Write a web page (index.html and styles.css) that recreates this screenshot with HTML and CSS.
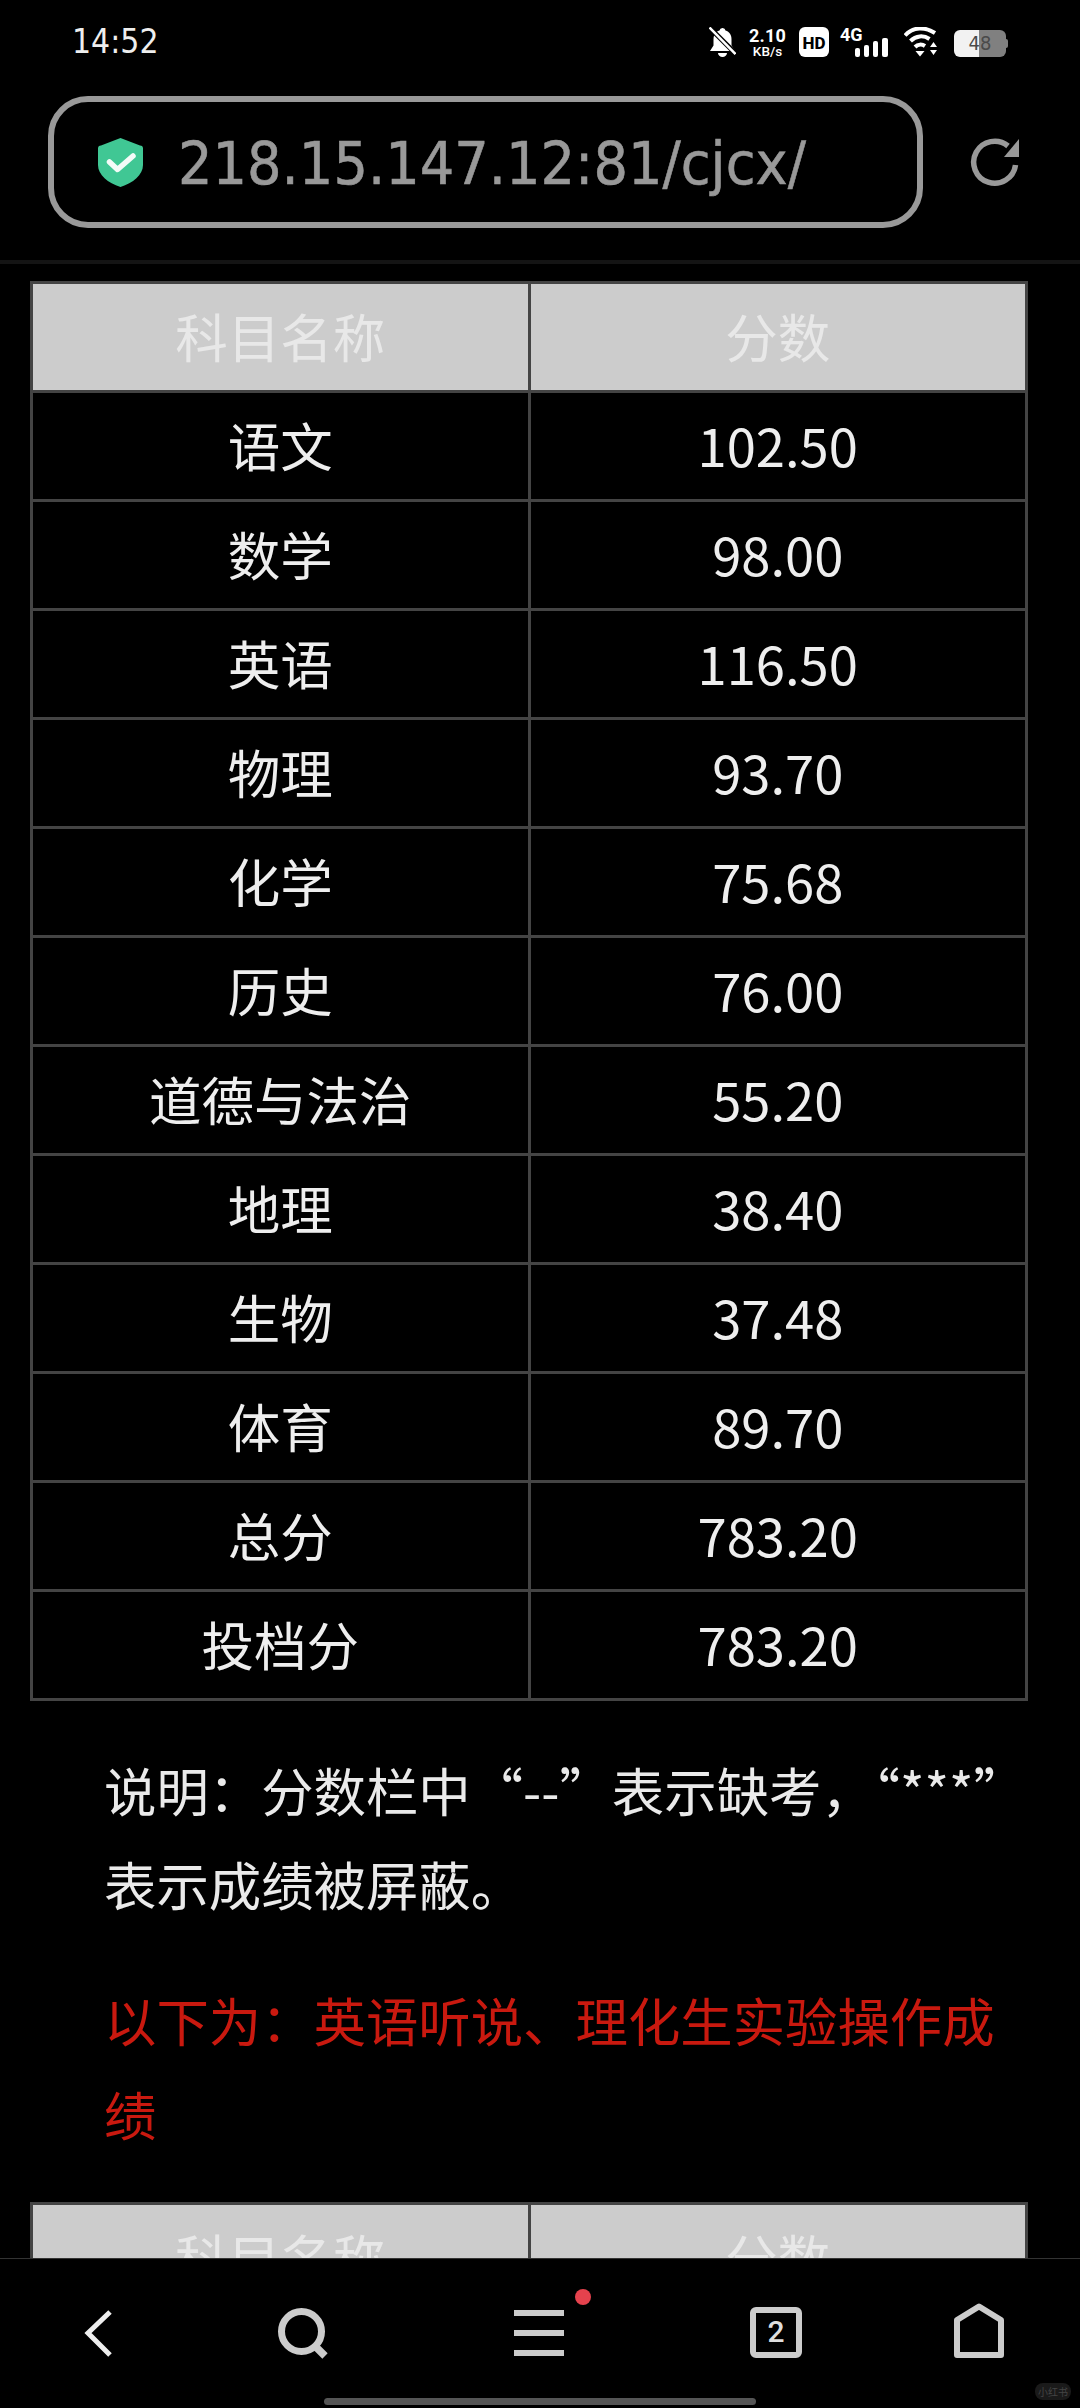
FILE: index.html
```html
<!DOCTYPE html>
<html lang="zh-CN">
<head>
<meta charset="utf-8">
<title>成绩查询</title>
<link rel="stylesheet" href="styles.css">
</head>
<body>
<div class="page">
  <header class="status">
    <span class="time">14:52</span>
    <div class="status-icons">
      <svg class="i-bell" viewBox="0 0 27 30"><path d="M13.5 1a3 3 0 0 1 3 2.5c4 1.200 6 4.500 6 9v6l3.500 5.500h-25l3.500-5.500v-6c0-4.500 2-7.800 6-9a3 3 0 0 1 3-2.500zM9 26h9a4.500 4 0 0 1-9 0z" fill="#fff"/><path d="M0 0 27 27" stroke="#000" stroke-width="5"/><path d="M0.500 0.500 26.500 27" stroke="#fff" stroke-width="2.500"/></svg>
      <div class="speed"><span class="speed-v">2.10</span><span class="speed-u">KB/s</span></div>
      <svg class="i-hd" viewBox="0 0 30 30"><rect width="30" height="30" rx="6" fill="#fff"/><text x="15" y="21.500" text-anchor="middle" class="hd-t">HD</text></svg>
      <svg class="i-net" viewBox="0 0 47 30"><text x="-3" y="14" class="net-t">4G</text><g fill="#fff"><rect x="12" y="21" width="5" height="9" rx="2"/><rect x="21" y="18" width="5" height="12" rx="2"/><rect x="30" y="14" width="5" height="16" rx="2"/><rect x="39" y="11" width="6" height="19" rx="2"/></g></svg>
      <svg class="i-wifi" viewBox="0 0 36 30"><g fill="none" stroke="#fff" stroke-width="4"><path d="M1 8.500C9-.5 21-.5 31 6"/><path d="M6.500 14C12 8.500 19.500 8 25.500 12"/><path d="M11 20c3-3 7-3 10-1"/></g><path d="M11.500 24h9l-4.500 5.500z" fill="#fff"/><path d="M29.500 15l-3.500 5h7zM26 23h7l-3.500 5z" fill="#fff"/></svg>
      <div class="battery"><div class="batt-body"><span class="batt-fill"></span><span class="batt-rest"></span><span class="batt-num">48</span></div><span class="batt-cap"></span></div>
    </div>
  </header>

  <div class="urlrow">
    <div class="urlbar">
      <svg class="i-shield" viewBox="0 0 45 49"><path d="M22.500 0 42 7.500a3 3 0 0 1 3 3V27c0 10-10 18-22.500 22C10 45 0 37 0 27V10.500a3 3 0 0 1 3-3z" fill="#40c794"/><path d="M11.500 24l8 7.500L35 18" fill="none" stroke="#f4fbf8" stroke-width="5.500" stroke-linecap="round" stroke-linejoin="round"/></svg>
      <span class="url-text">218.15.147.12:81/cjcx/</span>
    </div>
    <svg class="i-reload" viewBox="0 0 50 50"><path d="M45.500 28A21 21 0 1 1 38 9" fill="none" stroke="#999" stroke-width="5.500"/><path d="M49 2v18H34z" fill="#999"/></svg>
  </div>

  <main class="content">
    <table class="score">
      <thead><tr><th>科目名称</th><th>分数</th></tr></thead>
      <tbody>
        <tr><td>语文</td><td>102.50</td></tr>
        <tr><td>数学</td><td>98.00</td></tr>
        <tr><td>英语</td><td>116.50</td></tr>
        <tr><td>物理</td><td>93.70</td></tr>
        <tr><td>化学</td><td>75.68</td></tr>
        <tr><td>历史</td><td>76.00</td></tr>
        <tr><td>道德与法治</td><td>55.20</td></tr>
        <tr><td>地理</td><td>38.40</td></tr>
        <tr><td>生物</td><td>37.48</td></tr>
        <tr><td>体育</td><td>89.70</td></tr>
        <tr><td>总分</td><td>783.20</td></tr>
        <tr><td>投档分</td><td>783.20</td></tr>
      </tbody>
    </table>
    <p class="note">说明&#xFF1A;分数栏中“--”表示缺考&#xFF0C;“***”表示成绩被屏蔽。</p>
    <p class="note note-red">以下为&#xFF1A;英语听说、理化生实验操作成绩</p>
    <table class="score score-next">
      <thead><tr><th>科目名称</th><th>分数</th></tr></thead>
    </table>
  </main>

  <footer class="nav">
    <div class="nav-row">
      <span class="slot"><svg class="i-nav i-back" viewBox="0 0 30 60"><path d="M26 9 4 30l22 22" fill="none" stroke="#eee" stroke-width="5" stroke-linejoin="miter"/></svg></span>
      <span class="slot"><svg class="i-nav" viewBox="0 0 60 60"><circle cx="29.500" cy="28.500" r="20" fill="none" stroke="#ccc" stroke-width="7"/><path d="M44 44l9 9" stroke="#ccc" stroke-width="7.500"/></svg></span>
      <span class="slot slot-menu"><svg class="i-nav" viewBox="0 0 60 60"><g fill="#ccc"><rect x="5" y="7" width="50" height="6"/><rect x="5" y="27" width="50" height="6"/><rect x="5" y="47" width="50" height="6"/></g></svg><span class="dot"></span></span>
      <span class="slot"><svg class="i-nav" viewBox="0 0 60 60"><rect x="7" y="7" width="46" height="45" rx="3" fill="none" stroke="#ccc" stroke-width="6"/><text x="30" y="39" text-anchor="middle" class="tab-n">2</text></svg></span>
      <span class="slot"><svg class="i-nav" viewBox="0 0 60 60"><path d="M30 3.500 52 17v35H8V17z" fill="none" stroke="#ccc" stroke-width="6" stroke-linejoin="round"/></svg></span>
    </div>
    <div class="home-bar"></div>
    <span class="mark">小红书</span>
  </footer>
</div>
</body>
</html>
```
FILE: styles.css
```css
* { box-sizing: border-box; }
html, body { margin: 0; padding: 0; background: #000; }
body { font-family: "Noto Sans CJK SC", "Noto Sans", sans-serif; color: #eee; }
.page { width: 1080px; height: 2408px; display: flex; flex-direction: column; overflow: hidden; background: #000; }

.status { height: 96px; padding: 27px 72px 0 72px; display: flex; justify-content: space-between; align-items: flex-start; flex: none; }
.time { font-family: "DejaVu Sans", sans-serif; font-size: 33px; line-height: 30px; color: #eee; transform: scaleX(.91); transform-origin: left center; }
.status-icons { display: flex; align-items: center; gap: 14px; height: 30px; }
.i-bell { width: 27px; height: 30px; }
.speed { width: 35px; display: flex; flex-direction: column; align-items: center; font-family: "Roboto", sans-serif; color: #fff; font-weight: 700; }
.speed-v { font-size: 18px; line-height: 17px; letter-spacing: .2px; }
.speed-u { font-size: 13.500px; line-height: 14px; font-weight: 500; }
.i-hd { width: 30px; height: 30px; }
.hd-t { font: 800 17px "Roboto", sans-serif; fill: #000; }
.i-net { width: 47px; height: 30px; overflow: visible; }
.net-t { font: 700 18px "Roboto", sans-serif; fill: #fff; }
.tab-n { font: 500 30px "Roboto", sans-serif; fill: #ddd; }
.i-wifi { width: 36px; height: 30px; }
.battery { display: flex; align-items: center; width: 54px; height: 27px; margin-top: 3px; }
.batt-body { position: relative; width: 52px; height: 27px; display: flex; border-radius: 6px; overflow: hidden; }
.batt-fill { width: 25px; background: #f2f2f2; }
.batt-rest { flex: 1; background: #808080; }
.batt-num { position: absolute; inset: 0; text-align: center; font: 400 20px/27px "DejaVu Sans", sans-serif; color: #4a4a4a; transform: scaleX(.9); }
.batt-cap { width: 2px; height: 9px; background: #808080; border-radius: 0 2px 2px 0; }

.urlrow { flex: none; display: flex; align-items: flex-start; gap: 47px; padding: 0 0 32px 48px; border-bottom: 4px solid #141414; }
.urlbar { width: 875px; height: 132px; border: 6px solid #999; border-radius: 40px; display: flex; align-items: center; gap: 35px; padding-left: 44px; }
.i-shield { width: 45px; height: 49px; flex: none; }
.url-text { font-family: "DejaVu Sans", sans-serif; font-size: 59px; line-height: 70px; color: #999; white-space: nowrap; transform: scaleX(.92); transform-origin: left center; margin-top: 4px; -webkit-text-stroke: .6px #999; }
.i-reload { width: 50px; height: 50px; margin-top: 41px; flex: none; }

.content { flex: 1; min-height: 0; overflow: hidden; padding: 17px 52px 0 30px; }
.score { width: 998px; table-layout: fixed; border-collapse: collapse; border: 3px solid #444; }
.score th, .score td { width: 50%; height: 109px; padding: 0 0 5px; border: 3px solid #444; text-align: center; vertical-align: middle; font-size: 52.500px; font-weight: 400; line-height: 60px; }
.score th { background: #ccc; color: #e8e8e8; }
.score td { color: #eee; }
.note { margin: 42px 0 0; padding-left: 74px; width: 970px; font-size: 52.400px; line-height: 94px; color: #eaeaea; }
.score + .note { margin-top: 41px; }
.note-red { color: #c9190f; }
.score-next { margin-top: 42px; }

.nav { flex: none; height: 150px; border-top: 1px solid #333; position: relative; padding-top: 44px; background: #000; }
.nav-row { display: grid; grid-template-columns: 198px 208px 266px 208px 198px; height: 60px; }
.slot { position: relative; display: flex; align-items: center; justify-content: center; }
.i-nav { width: 60px; height: 60px; }
.i-back { width: 30px; }
.dot { position: absolute; left: 169px; top: -14px; width: 16px; height: 16px; border-radius: 50%; background: #e5424d; }
.slot-menu { padding: 0; }
.home-bar { width: 432px; height: 7px; margin: 35px auto 0; border-radius: 4px; background: #555; }
.mark { position: absolute; left: 1035px; top: 124px; width: 36px; height: 17px; border-radius: 8px; background: #1a1a1a; color: #444; font-size: 10px; line-height: 17px; text-align: center; }
```
